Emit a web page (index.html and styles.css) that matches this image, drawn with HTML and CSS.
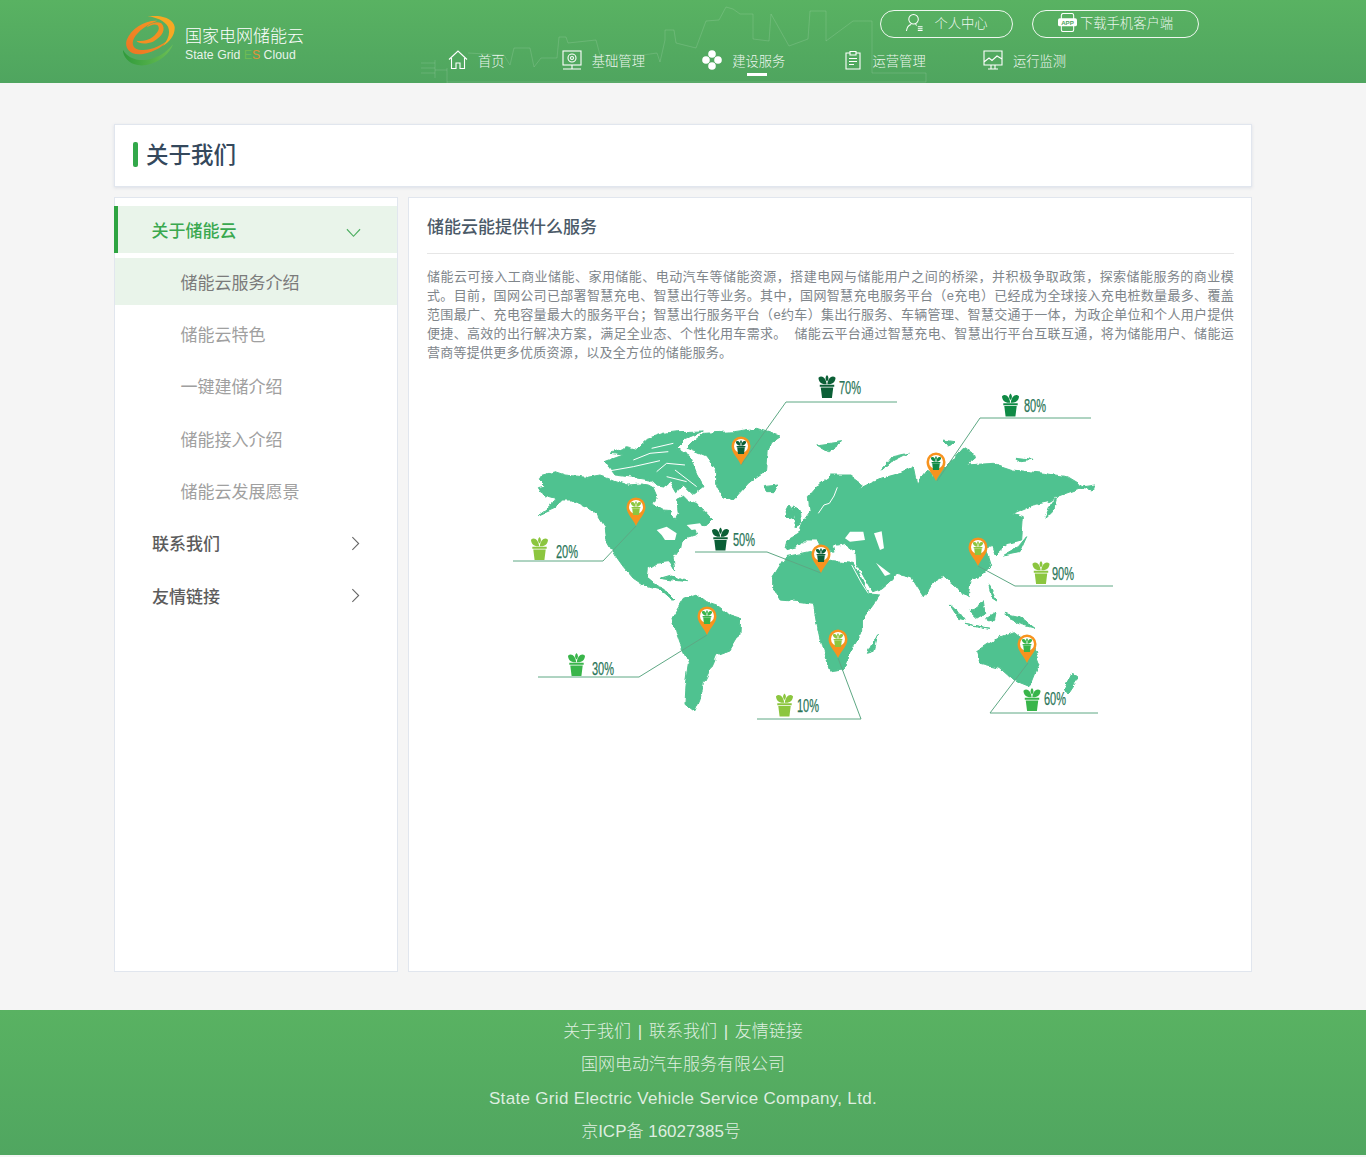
FILE: index.html
```html
<!DOCTYPE html>
<html lang="zh-CN">
<head>
<meta charset="utf-8">
<title>关于我们</title>
<link rel="stylesheet" href="styles.css">
</head>
<body>
<header class="header">
  <svg class="skyline" viewBox="0 0 1366 83" aria-hidden="true">
    <path d="M421 63h14M421 68h14M421 73h14M435 60v18M435 70h12M447 68v15M447 82H926V73H872V21H853L826 41V11H810L808 39 789 46 771 14 769 41 753 39V14H740L733 9 726 7 719 20 706 21 696 48 676 43 674 30H665V40L660 62 657 53 643 55H600L596 40 568 43 566 37H559L557 58H541L534 67 530 48H514L510 65 504 55 468 53"/>
  </svg>
  <a class="logo" href="#">
    <svg class="logo-mark" viewBox="15 18 156 156" aria-hidden="true">
      <defs>
        <linearGradient id="lg-g" x1="0" y1="0" x2="1" y2="0"><stop offset="0" stop-color="#2f9a3a"/><stop offset="1" stop-color="#6cbf55"/></linearGradient>
        <linearGradient id="lg-o" x1="0" y1="1" x2="1" y2="0"><stop offset="0" stop-color="#ec7424"/><stop offset="1" stop-color="#f69a24"/></linearGradient>
      </defs>
      <path fill="url(#lg-g)" d="M14 118C16 150 45 172 85 165 125 158 155 130 165 103 145 128 115 148 80 150 50 152 25 140 14 118Z"/>
      <path fill="url(#lg-o)" d="M118 32C80 30 40 55 26 90 18 115 38 138 75 132 110 126 140 108 155 85 135 105 105 120 75 120 48 122 38 105 48 85 60 62 90 42 118 32Z"/>
      <path fill="#f7a823" d="M88 18C120 14 165 22 170 50 172 75 155 95 135 108 150 88 158 70 150 50 140 32 115 22 88 18Z"/>
      <path fill="#f48f22" d="M130 40C145 55 135 80 105 95 85 103 62 102 55 92 70 95 90 92 105 80 120 68 128 55 118 45 108 40 95 48 85 52 95 40 115 32 130 40Z"/>
    </svg>
    <span class="logo-text">
      <span class="logo-cn">国家电网储能云</span>
      <span class="logo-en">State Grid <i class="es-e">E</i><i class="es-s">S</i> Cloud</span>
    </span>
  </a>
  <div class="header-right">
    <div class="header-actions">
      <a class="pill pill-user" href="#">
        <svg class="pill-icon" viewBox="0 0 20 20" aria-hidden="true"><circle cx="9" cy="6.500" r="5"/><path d="M1.500 19c.5-4 3-6.500 5-7M11 12l1.500 1M13.500 14.500h5M13.500 16.500h5M13.500 18.500h5"/></svg>
        个人中心
      </a>
      <a class="pill pill-app" href="#">
        <svg class="pill-icon app-icon" viewBox="0 0 20 20" aria-hidden="true"><rect x="3.500" y=".5" width="13" height="19" rx="2"/><rect class="app-badge" x="0" y="5.500" width="20" height="8.500" rx="2"/><text class="app-text" x="10" y="12.300">APP</text></svg>
        下载手机客户端
      </a>
    </div>
    <nav class="nav">
      <a class="nav-item" href="#">
        <svg class="nav-icon" viewBox="0 0 20 20" aria-hidden="true"><path d="M1 9.500 10 1l9 8.500M3.500 8v10.500H8V13h4v5.500h4.500V8"/></svg>
        首页
      </a>
      <a class="nav-item" href="#">
        <svg class="nav-icon" viewBox="0 0 20 20" aria-hidden="true"><rect x="1" y="1" width="18" height="14"/><circle cx="10" cy="8" r="4"/><circle cx="10" cy="8" r="1.500"/><path d="M10 15v4M6 19h8M1 19h18"/></svg>
        基础管理
      </a>
      <a class="nav-item nav-active" href="#">
        <svg class="nav-icon nav-clover" viewBox="0 0 20 20" aria-hidden="true"><circle cx="10" cy="4" r="3.800"/><circle cx="10" cy="16" r="3.800"/><circle cx="4" cy="10" r="3.800"/><circle cx="16" cy="10" r="3.800"/></svg>
        建设服务
      </a>
      <a class="nav-item" href="#">
        <svg class="nav-icon" viewBox="0 0 20 20" aria-hidden="true"><path d="M7 3H3v16h14V3h-4M7 1.500h6V5H7ZM6 8.500h8M6 11.500h8M6 14.500h5"/></svg>
        运营管理
      </a>
      <a class="nav-item" href="#">
        <svg class="nav-icon" viewBox="0 0 20 20" aria-hidden="true"><path d="M1 1h18v14H1ZM1 12l5-4 3 2.500L14 6l5 3M8 15v4M12 15v4M5 19h10"/></svg>
        运行监测
      </a>
    </nav>
  </div>
</header>

<main class="main">
  <section class="title-card">
    <span class="title-bar"></span>
    <h1 class="page-title">关于我们</h1>
  </section>
  <div class="columns">
    <aside class="sidebar">
      <a class="side-row side-open" href="#">关于储能云
        <svg class="chev chev-down" viewBox="0 0 16 10" aria-hidden="true"><path d="M1 1l7 7.500L15 1"/></svg>
      </a>
      <a class="side-row side-sub side-current" href="#">储能云服务介绍</a>
      <a class="side-row side-sub" href="#">储能云特色</a>
      <a class="side-row side-sub" href="#">一键建储介绍</a>
      <a class="side-row side-sub" href="#">储能接入介绍</a>
      <a class="side-row side-sub" href="#">储能云发展愿景</a>
      <a class="side-row side-top" href="#">联系我们
        <svg class="chev chev-right" viewBox="0 0 10 16" aria-hidden="true"><path d="M1.500 1l7 7-7 7"/></svg>
      </a>
      <a class="side-row side-top" href="#">友情链接
        <svg class="chev chev-right" viewBox="0 0 10 16" aria-hidden="true"><path d="M1.500 1l7 7-7 7"/></svg>
      </a>
    </aside>
    <article class="content">
      <h2 class="content-title">储能云能提供什么服务</h2>
      <p class="content-text">储能云可接入工商业储能、家用储能、电动汽车等储能资源，搭建电网与储能用户之间的桥梁，并积极争取政策，探索储能服务的商业模式。目前，国网公司已部署智慧充电、智慧出行等业务。其中，国网智慧充电服务平台（e充电）已经成为全球接入充电桩数量最多、覆盖范围最广、充电容量最大的服务平台；智慧出行服务平台（e约车）集出行服务、车辆管理、智慧交通于一体，为政企单位和个人用户提供便捷、高效的出行解决方案，满足全业态、个性化用车需求。&nbsp; 储能云平台通过智慧充电、智慧出行平台互联互通，将为储能用户、储能运营商等提供更多优质资源，以及全方位的储能服务。</p>
      <svg class="world" viewBox="500 370 620 350" aria-label="世界地图">
        <defs>
          <filter id="rough" x="-5%" y="-5%" width="110%" height="110%">
            <feTurbulence type="fractalNoise" baseFrequency=".035" numOctaves="3" seed="4"/>
            <feDisplacementMap in="SourceGraphic" scale="16" xChannelSelector="R" yChannelSelector="G"/>
          </filter>
          <symbol id="pot" viewBox="0 0 52 70">
            <path d="M25 28C10 30 0 20 0 8 10-1 23 8 25 28ZM27 28C42 30 52 20 52 8 42-1 29 8 27 28ZM26 20C20 13 20 6 26 0 32 6 32 13 26 20Z"/>
            <path d="M4 30H48V36H4ZM7 38H45L41 70H11Z"/>
          </symbol>
          <symbol id="pin" viewBox="0 0 20 29">
            <path class="pin-body" d="M10 29C7 22 .5 17 .5 10a9.500 9.500 0 0 1 19 0C19.500 17 13 22 10 29Z"/>
            <circle class="pin-hole" cx="10" cy="10" r="7"/>
          </symbol>
        </defs>
        <g class="land" transform="translate(500 370) scale(.3333)" filter="url(#rough)">
          <path d="M115 350 135 345 118 328 125 316 165 305 195 315 225 318 262 322 300 315 320 322 345 332 385 345 425 342 445 345 458 352 472 385 455 400 472 410 490 420 510 422 522 452 535 430 530 385 550 375 570 395 590 400 612 425 636 450 615 470 580 468 590 490 565 498 550 510 545 535 530 550 520 565 524 600 510 575 470 580 445 595 442 625 460 640 475 650 495 655 510 675 525 690 515 690 480 660 450 652 430 645 400 625 370 590 345 555 320 510 315 470 290 430 260 410 215 390 190 390 165 415 115 437 150 410 165 385 130 375Z"/>
          <path d="M315 275 370 255 330 250 380 230 410 238 445 205 490 190 530 185 610 183 560 205 530 235 570 260 590 310 612 350 580 375 550 345 530 365 510 330 500 350 470 345 450 330 400 322 345 315Z"/>
          <path d="M560 235 585 210 610 190 700 185 770 175 840 198 815 215 805 240 800 300 770 320 745 340 700 390 670 380 650 340 650 300 620 260Z"/>
          <path d="M517 740 550 685 590 672 620 695 650 705 690 735 722 745 720 790 690 840 650 855 640 880 610 940 600 990 585 1025 552 1000 555 950 565 880 540 820 530 790Z"/>
          <path d="M480 625 515 615 560 635 515 630ZM790 350 835 345 825 365 800 365Z"/>
          <path d="M855 435 870 405 885 425 880 450ZM880 408 900 420 905 455 885 470 885 440Z"/>
        </g>
        <g class="sea" transform="translate(500 370) scale(.3333)">
          <path class="sea-line" d="M315 305 400 290 480 272M400 270 450 250 505 245M455 235 520 220M470 305 500 280 555 285M525 300 590 350M500 320 560 335"/>
          <path d="M470 480 500 470 530 490 525 510 495 510 485 495ZM560 465 600 460 610 475 575 480Z"/>
        </g>
        <g class="land" transform="translate(800 370) scale(.3333)" filter="url(#rough)">
          <path d="M-45 540 -40 510 -5 490 5 460 30 425 25 380 60 340 95 315 150 315 190 345 170 360 210 340 245 325 300 310 340 290 350 340 380 300 400 320 440 290 490 235 530 260 500 285 580 280 640 300 730 310 800 320 850 350 885 345 880 360 840 355 770 380 745 395 700 405 640 430 670 440 665 510 625 520 595 545 585 555 575 525 560 540 575 590 540 620 510 630 505 680 480 670 465 650 430 620 395 640 370 680 345 640 335 620 290 610 280 625 245 655 215 665 170 585 168 545 135 520 115 525 100 525 105 550 70 530 50 510 10 510 -10 530Z"/>
          <path d="M-82 625 -42 560 30 545 62 570 100 575 160 580 180 620 205 672 238 675 215 710 185 750 185 790 160 830 130 900 90 905 65 830 50 760 40 700 0 695 -60 690 -82 650Z"/>
          <path d="M205 850 235 790 222 845ZM530 845 600 800 640 785 665 805 698 825 718 880 690 950 640 930 600 895 540 880ZM735 445 755 395 770 385 760 420ZM610 555 655 530 680 500 660 545ZM450 705 480 730 495 750 475 745ZM510 725 550 695 555 730 530 745ZM495 760 570 775 540 770ZM560 745 585 730 580 755ZM615 730 660 740 705 775 650 760ZM565 640 590 690 575 680ZM815 910 835 925 805 970 790 960ZM50 225 125 215 85 245ZM245 300 280 260 325 250 275 275ZM430 210 465 215 445 230ZM645 262 700 268 660 272Z"/>
        </g>
        <g class="sea" transform="translate(800 370) scale(.3333)">
          <path class="sea-line" d="M155 585 185 640 205 670M55 430 72 405 88 400 102 378 112 352M460 670 505 680"/>
          <path d="M135 505 150 485 190 485 195 510 150 515ZM222 490 245 484 252 535 240 540ZM228 578 272 612 255 618Z"/>
        </g>
        <path class="lead" d="M513 561H603L636 526M695 552H767L821 573M538 677H639L707 635M741 465 786 402H897M937 481 980 418H1091M978 566 1015 586H1113M757 719H861L838 658M1028 663 990 713H1098"/>

        <use class="pot-lime" href="#pot" x="531" y="537" width="17" height="23"/>
        <use class="pot-mid" href="#pot" x="568" y="653" width="17" height="23"/>
        <use class="pot-dark" href="#pot" x="712" y="527" width="17" height="24"/>
        <use class="pot-lime" href="#pot" x="776" y="693" width="17" height="24"/>
        <use class="pot-dark" href="#pot" x="818" y="375" width="18" height="23"/>
        <use class="pot-deep" href="#pot" x="1002" y="393" width="17" height="24"/>
        <use class="pot-lime" href="#pot" x="1032" y="561" width="18" height="23"/>
        <use class="pot-mid" href="#pot" x="1023" y="688" width="18" height="23"/>

        <text class="pct" x="556" y="558" textLength="22" lengthAdjust="spacingAndGlyphs">20%</text>
        <text class="pct" x="592" y="675" textLength="22" lengthAdjust="spacingAndGlyphs">30%</text>
        <text class="pct" x="733" y="546" textLength="22" lengthAdjust="spacingAndGlyphs">50%</text>
        <text class="pct" x="797" y="712" textLength="22" lengthAdjust="spacingAndGlyphs">10%</text>
        <text class="pct" x="839" y="394" textLength="22" lengthAdjust="spacingAndGlyphs">70%</text>
        <text class="pct" x="1024" y="412" textLength="22" lengthAdjust="spacingAndGlyphs">80%</text>
        <text class="pct" x="1052" y="580" textLength="22" lengthAdjust="spacingAndGlyphs">90%</text>
        <text class="pct" x="1044" y="705" textLength="22" lengthAdjust="spacingAndGlyphs">60%</text>

        <use href="#pin" x="731" y="436" width="20" height="29"/><use class="pot-dark" href="#pot" x="735.500" y="440" width="11" height="14"/>
        <use href="#pin" x="626" y="497" width="20" height="29"/><use class="pot-lime" href="#pot" x="630.500" y="501" width="11" height="14"/>
        <use href="#pin" x="697" y="606" width="20" height="29"/><use class="pot-mid" href="#pot" x="701.500" y="610" width="11" height="14"/>
        <use href="#pin" x="811" y="544" width="20" height="29"/><use class="pot-dark" href="#pot" x="815.500" y="548" width="11" height="14"/>
        <use href="#pin" x="926" y="452" width="20" height="29"/><use class="pot-deep" href="#pot" x="930.500" y="456" width="11" height="14"/>
        <use href="#pin" x="968" y="537" width="20" height="29"/><use class="pot-lime" href="#pot" x="972.500" y="541" width="11" height="14"/>
        <use href="#pin" x="828" y="629" width="20" height="29"/><use class="pot-lime" href="#pot" x="832.500" y="633" width="11" height="14"/>
        <use href="#pin" x="1017" y="634" width="20" height="29"/><use class="pot-mid" href="#pot" x="1021.500" y="638" width="11" height="14"/>
      </svg>
    </article>
  </div>
</main>

<footer class="footer">
  <p class="footer-line footer-links">关于我们 | 联系我们 | 友情链接</p>
  <p class="footer-line">国网电动汽车服务有限公司</p>
  <p class="footer-line footer-en">State Grid Electric Vehicle Service Company, Ltd.</p>
  <p class="footer-line footer-icp">京ICP备 16027385号</p>
</footer>
</body>
</html>
```

FILE: styles.css
```css
* { box-sizing: border-box; }
html, body { margin: 0; padding: 0; }
body {
  background: #f5f5f5;
  font-family: "Liberation Sans", "Noto Sans CJK SC", sans-serif;
  height: 1157px;
  overflow: hidden;
}
a { color: inherit; text-decoration: none; }
h1, h2, p { margin: 0; }

/* header */
.header {
  position: relative;
  display: flex;
  height: 83px;
  padding-left: 123px;
  color: #fff;
  background: linear-gradient(180deg, #59b262 0%, #4fa55f 100%);
}
.skyline {
  position: absolute;
  left: 0;
  top: 0;
  width: 1366px;
  height: 83px;
  fill: none;
  stroke: rgba(255, 255, 255, .13);
  stroke-width: 1;
}
.logo {
  position: relative;
  display: flex;
  width: 325px;
  padding-top: 16px;
}
.logo-mark { width: 52px; height: 52px; }
.logo-text { display: flex; flex-direction: column; margin-left: 10px; padding-top: 10px; }
.logo-cn { font-size: 17px; line-height: 22px; font-weight: 300; }
.logo-en {
  font-size: 12.300px;
  line-height: 16px;
  margin-top: -1px;
  color: rgba(255, 255, 255, .88);
}
.logo-en i { font-style: normal; }
.es-e { color: #6dbb55; }
.es-s { color: #e2913a; }
.header-right { position: relative; width: 751px; }
.header-actions {
  display: flex;
  justify-content: flex-end;
  gap: 19px;
  padding-top: 10px;
}
.pill {
  display: flex;
  align-items: center;
  justify-content: center;
  height: 28px;
  padding-bottom: 3px;
  border: 1.500px solid rgba(255, 255, 255, .9);
  border-radius: 14px;
  font-size: 13.300px;
  font-weight: 300;
  color: rgba(255, 255, 255, .9);
}
.pill-user { width: 133px; gap: 10px; }
.pill-app { width: 167px; gap: 3px; }
.pill-icon {
  width: 19px;
  height: 19px;
  fill: none;
  stroke: #fff;
  stroke-width: 1.100;
}
.app-badge { fill: #fff; stroke: none; }
.app-text {
  fill: #4fa55f;
  stroke: none;
  font-size: 6.500px;
  font-weight: 700;
  text-anchor: middle;
}
.nav { display: flex; gap: 57.200px; padding-top: 11px; }
.nav-item {
  position: relative;
  display: flex;
  align-items: center;
  gap: 10px;
  height: 22px;
  font-size: 13.300px;
  font-weight: 300;
  color: rgba(255, 255, 255, .92);
}
.nav-icon {
  width: 20px;
  height: 20px;
  fill: none;
  stroke: #fff;
  stroke-width: 1.100;
}
.nav-clover { fill: #fff; stroke: none; }
.nav-active::after {
  content: "";
  position: absolute;
  left: 45px;
  bottom: -5px;
  width: 20px;
  height: 3px;
  background: #fff;
}

/* main */
.main { padding: 41px 114px 38px; height: 927px; }
.title-card {
  display: flex;
  align-items: center;
  gap: 8px;
  height: 63px;
  padding: 0 0 2px 18px;
  background: #fff;
  border: 1px solid #e1e6ee;
  box-shadow: 0 1px 3px rgba(150, 165, 190, .25);
}
.title-bar {
  width: 5px;
  height: 25px;
  border-radius: 2px;
  background: #32a84a;
}
.page-title {
  margin-bottom: 4px;
  font-size: 22.500px;
  font-weight: 500;
  color: #34485c;
}
.columns { display: flex; gap: 10px; margin-top: 10px; height: 775px; }
.sidebar {
  display: flex;
  flex-direction: column;
  gap: 5.300px;
  width: 284px;
  padding-top: 8px;
  background: #fff;
  border: 1px solid #e1e6ee;
}
.side-row {
  position: relative;
  display: flex;
  align-items: center;
  height: 47px;
  padding-bottom: 1px;
  padding-left: 37px;
  font-size: 17px;
}
.side-open {
  padding-left: 33.500px;
  border-left: 4px solid #2ea441;
  margin-left: -1px;
  background: #e9f4ea;
  color: #3aa84f;
  font-weight: 500;
}
.side-sub { padding-left: 65.500px; color: #a0a0a0; }
.side-current { background: #e9f4ea; color: #7b7b7b; }
.side-top { color: #5c5c5c; font-weight: 500; }
.chev { position: absolute; fill: none; stroke-width: 1.200; }
.chev-down { right: 36px; top: 22px; width: 15px; height: 10px; stroke: #4cae60; }
.chev-right { right: 37px; top: 16px; width: 9px; height: 15px; stroke: #666; }
.content {
  flex: 1;
  padding: 18px 17px 0 18px;
  background: #fff;
  border: 1px solid #e1e6ee;
}
.content-title {
  height: 38px;
  font-size: 17px;
  line-height: 24px;
  font-weight: 500;
  color: #4b5a68;
  border-bottom: 1px solid #e6e6e6;
}
.content-text {
  margin-top: 13px;
  font-size: 13px;
  line-height: 19px;
  letter-spacing: .27px;
  color: #80868b;
  text-align: justify;
}
.world {
  display: block;
  width: 620px;
  height: 350px;
  margin: 8px 0 0 73px;
}
.land { fill: #50c290; stroke: #50c290; stroke-width: 3; stroke-linejoin: round; }
.sea { fill: #fff; }
.sea-line { fill: none; stroke: #fff; stroke-width: 3; stroke-linejoin: round; }
.lead { fill: none; stroke: #5ea884; stroke-width: 1; }
.pin-body { fill: #f7931e; }
.pin-hole { fill: #fff; }
.pot-lime { fill: #8cc63f; }
.pot-mid { fill: #39b54a; }
.pot-dark { fill: #0b5f36; }
.pot-deep { fill: #0f8a45; }
.pct {
  fill: #2a7558;
  stroke: #2a7558;
  stroke-width: .25;
  font-family: "Liberation Sans Narrow", "Liberation Sans", sans-serif;
  font-size: 18px;
}

/* footer */
.footer {
  height: 145px;
  padding-top: 5px;
  text-align: center;
  color: rgba(255, 255, 255, .82);
  background: linear-gradient(180deg, #59b262 0%, #50a660 100%);
}
.footer-line {
  font-size: 17px;
  line-height: 33.300px;
  font-weight: 300;
}
.footer-links { word-spacing: 2px; }
.footer-en { letter-spacing: .33px; }
.footer-icp { padding-right: 44px; }
```
